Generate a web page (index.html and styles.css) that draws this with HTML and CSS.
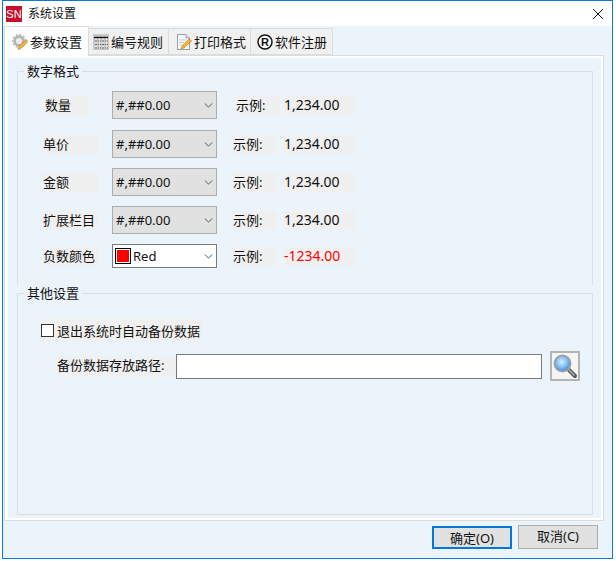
FILE: index.html
```html
<!DOCTYPE html>
<html lang="zh-CN">
<head>
<meta charset="utf-8">
<title>系统设置</title>
<link rel="stylesheet" href="styles.css">
</head>
<body>
<div class="window">
  <header class="titlebar">
    <span class="logo">SN</span>
    <span class="title">系统设置</span>
    <svg class="close" width="12" height="12" viewBox="0 0 12 12"><path d="M1 1L11 11M11 1L1 11" stroke="#111" stroke-width="1" fill="none"/></svg>
  </header>
  <div class="body">
    <nav class="tabs">
      <div class="tab active">
        <svg width="16" height="16" viewBox="0 0 16 16"><circle cx="7" cy="7" r="4.4" fill="#eee" stroke="#b4b4b4" stroke-width="2.6"/><circle cx="7" cy="7" r="6.2" fill="none" stroke="#c0c0c0" stroke-width="1.8" stroke-dasharray="2.2 1.4"/><path d="M6 15.5L7 12.5L14 5.5L16 7.5L9 14.5Z" fill="#f2b53c" stroke="#b87a1c" stroke-width=".6"/></svg>
        <span>参数设置</span>
      </div>
      <div class="tab">
        <svg width="16" height="16" viewBox="0 0 16 16"><rect width="16" height="16" fill="#c8c8c8"/><path d="M1 3.5H15" stroke="#111" stroke-width="1.4"/><path d="M2 7H14.5M2 10.5H14.5M2 14H14.5" stroke="#111" stroke-dasharray="2 1.5"/><path d="M3 4V15M6.5 4V15M10 4V15M13.5 4V15" stroke="#fff" stroke-width=".7"/></svg>
        <span>编号规则</span>
      </div>
      <div class="tab">
        <svg width="16" height="16" viewBox="0 0 16 16"><path d="M1.5 .5H10L13.5 4V15.5H1.5Z" fill="#f7f9fc" stroke="#9a9ea6"/><path d="M10 .5V4H13.5" fill="#dfe3ea" stroke="#9a9ea6"/><path d="M3 6H10M3 8.5H8M3 11H6" stroke="#c3c8d0"/><path d="M5 15L6 12L13 5L15.5 7L8 14Z" fill="#f2b53c" stroke="#b87a1c" stroke-width=".6"/></svg>
        <span>打印格式</span>
      </div>
      <div class="tab">
        <svg width="16" height="16" viewBox="0 0 16 16"><circle cx="8" cy="8" r="7" fill="#fff" stroke="#111" stroke-width="1.5"/><text x="8" y="12" text-anchor="middle" class="reg">R</text></svg>
        <span>软件注册</span>
      </div>
    </nav>
    <main class="panel">
      <fieldset class="group numbers">
        <legend>数字格式</legend>
        <div class="row first">
          <span class="label">数量</span>
          <div class="select"><span>#,##0.00</span><svg class="chev" width="9" height="5" viewBox="0 0 11 6"><path d="M1 .5L5.5 5L10 .5" fill="none" stroke="#555" stroke-width="1.2"/></svg></div>
          <span class="label ex">示例:</span>
          <span class="value">1,234.00</span>
        </div>
        <div class="row">
          <span class="label">单价</span>
          <div class="select"><span>#,##0.00</span><svg class="chev" width="9" height="5" viewBox="0 0 11 6"><path d="M1 .5L5.5 5L10 .5" fill="none" stroke="#555" stroke-width="1.2"/></svg></div>
          <span class="label ex">示例:</span>
          <span class="value">1,234.00</span>
        </div>
        <div class="row">
          <span class="label">金额</span>
          <div class="select"><span>#,##0.00</span><svg class="chev" width="9" height="5" viewBox="0 0 11 6"><path d="M1 .5L5.5 5L10 .5" fill="none" stroke="#555" stroke-width="1.2"/></svg></div>
          <span class="label ex">示例:</span>
          <span class="value">1,234.00</span>
        </div>
        <div class="row">
          <span class="label">扩展栏目</span>
          <div class="select"><span>#,##0.00</span><svg class="chev" width="9" height="5" viewBox="0 0 11 6"><path d="M1 .5L5.5 5L10 .5" fill="none" stroke="#555" stroke-width="1.2"/></svg></div>
          <span class="label ex">示例:</span>
          <span class="value">1,234.00</span>
        </div>
        <div class="row color">
          <span class="label">负数颜色</span>
          <div class="select white"><i class="swatch"></i><span>Red</span><svg class="chev" width="9" height="5" viewBox="0 0 11 6"><path d="M1 .5L5.5 5L10 .5" fill="none" stroke="#555" stroke-width="1.2"/></svg></div>
          <span class="label ex">示例:</span>
          <span class="value neg">-1234.00</span>
        </div>
      </fieldset>
      <fieldset class="group other">
        <legend>其他设置</legend>
        <label class="check"><i class="box"></i><span>退出系统时自动备份数据</span></label>
        <div class="path">
          <span class="path-label">备份数据存放路径:</span>
          <div class="input"></div>
          <button class="search" type="button">
            <svg width="26" height="26" viewBox="0 0 26 26"><defs><radialGradient id="lens" cx=".45" cy=".4" r=".65"><stop offset="0" stop-color="#dceeff"/><stop offset=".55" stop-color="#7dbcf2"/><stop offset="1" stop-color="#2a78cc"/></radialGradient></defs><path d="M16 16L23 23" stroke="#555" stroke-width="4" stroke-linecap="round"/><path d="M16 16L22.5 22.5" stroke="#bbb" stroke-width="1.2"/><circle cx="10.5" cy="10.5" r="8" fill="url(#lens)" stroke="#9aa2aa" stroke-width="2"/></svg>
          </button>
        </div>
      </fieldset>
    </main>
    <footer class="actions">
      <button class="btn primary" type="button">确定(O)</button>
      <button class="btn cancel" type="button">取消(C)</button>
    </footer>
  </div>
</div>
</body>
</html>
```

FILE: styles.css
```css
* { box-sizing: border-box; }
html, body { margin: 0; height: 100%; background: #fff; }
body {
  padding: 0 3px 2px 2px;
  font: 13px/18px "Noto Sans", "Noto Sans CJK SC", sans-serif;
  color: #111;
}
.window {
  height: 100%;
  display: flex;
  flex-direction: column;
  border: 1px solid #0a7ad6;
  background: #fff;
}
.titlebar {
  height: 25px;
  flex: none;
  display: flex;
  align-items: center;
  padding: 0 4px 0 3px;
  gap: 6px;
}
.logo {
  width: 16px;
  height: 16px;
  background: #c8102e;
  color: #fff;
  font: 11px/16px "Liberation Sans", sans-serif;
  text-align: center;
}
.title { flex: 1; font-size: 12px; }
.close { margin-right: 4px; }
.body {
  flex: 1;
  display: flex;
  flex-direction: column;
  background: #ecf4fb;
  min-height: 0;
}
.tabs {
  display: flex;
  align-items: flex-end;
  height: 29px;
  flex: none;
  padding-left: 1px;
  position: relative;
  z-index: 1;
}
.tab {
  height: 27px;
  width: 82px;
  display: flex;
  align-items: center;
  gap: 2px;
  padding-left: 6px;
  background: #f0f0f0;
  border: 1px solid #dcdcdc;
  border-left: 0;
  white-space: nowrap;
}
.tab:nth-child(2) { width: 80px; padding-left: 4px; }
.tab:nth-child(3) { padding-left: 7px; }
.tab.active {
  width: 85px;
  height: 30px;
  margin-bottom: -1px;
  background: #fff;
  border-left: 1px solid #dcdcdc;
  border-bottom: 0;
  padding-left: 7px;
}
.reg { font: bold 11px "Liberation Sans", sans-serif; fill: #111; }
.panel {
  flex: 1;
  margin: 0 8px 0 1px;
  padding: 0 10px 5px 12px;
  border: 1px solid #dcdcdc;
  box-shadow: inset 3px 0 0 #fff, inset 0 0 0 2px #fff;
  display: flex;
  flex-direction: column;
  min-height: 0;
}
.group {
  margin: 0;
  padding: 0;
  border: 1px solid #d9dfe3;
  min-width: 0;
}
.group legend {
  margin-left: 6px;
  padding: 0 3px;
  line-height: 17px;
}
.numbers { margin-top: 7px; height: 222px; padding-top: 6px; border-bottom: 0; flex: none; }
.row {
  display: flex;
  align-items: center;
  height: 38px;
  margin-left: 25px;
}
.row .label { width: 55px; height: 19px; background: #f0f0f0; flex: none; }
.row .select { margin-left: 14px; }
.row .ex { width: 44px; margin-left: 16px; }
.row .value { width: 71px; height: 19px; margin-left: 7px; font-size: 14px; background: #f0f0f0; }
.row.first { margin-bottom: 1px; }
.row.first .label { width: 44px; margin-left: 2px; }
.row.first .select { margin-left: 23px; }
.row.first .ex { margin-left: 19px; }
.row.first .value { margin-left: 4px; }
.row.color { height: 34px; }
.select {
  width: 105px;
  height: 28px;
  flex: none;
  display: flex;
  align-items: center;
  padding: 0 3px 0 3px;
  background: #e1e1e1;
  border: 1px solid #adadad;
}
.select span { flex: 1; font-size: 13px; }
.select.white { height: 24px; padding-left: 2px; background: #fff; border-color: #7a7a7a; }
.swatch {
  width: 16px;
  height: 16px;
  margin-right: 2px;
  border: 1px solid #000;
  background: #f00;
  box-shadow: inset 0 0 0 1px #fff;
}
.neg { color: #f00; }
.other { flex: 1; padding: 17px 12px 0 0; min-height: 0; }
.check {
  display: inline-flex;
  align-items: center;
  height: 23px;
  width: 161px;
  margin-left: 23px;
  background: #f0f0f0;
  gap: 3px;
}
.box { width: 13px; height: 13px; background: #fff; border: 1px solid #333; }
.path {
  display: flex;
  align-items: center;
  margin-top: 9px;
  margin-left: 39px;
}
.path-label { width: 119px; height: 21px; background: #f0f0f0; }
.input { flex: 1; height: 25px; background: #fff; border: 1px solid #7a7a7a; }
.search {
  width: 30px;
  height: 30px;
  margin-left: 8px;
  padding: 0;
  display: flex;
  align-items: center;
  justify-content: center;
  background: #f5f5f5;
  border: 2px solid #b4b4b4;
}
.actions {
  flex: none;
  height: 37px;
  display: flex;
  justify-content: flex-end;
  align-items: flex-start;
  gap: 6px;
  padding: 4px 14px 0 0;
}
.btn {
  width: 80px;
  height: 24px;
  padding: 0;
  font: 13px/18px "Noto Sans", "Noto Sans CJK SC", sans-serif;
  color: #111;
  background: #e1e1e1;
  border: 1px solid #adadad;
}
.btn.cancel { padding-bottom: 2px; }
.btn.primary { margin-top: 1px; height: 23px; border: 2px solid #0078d7; }
```
